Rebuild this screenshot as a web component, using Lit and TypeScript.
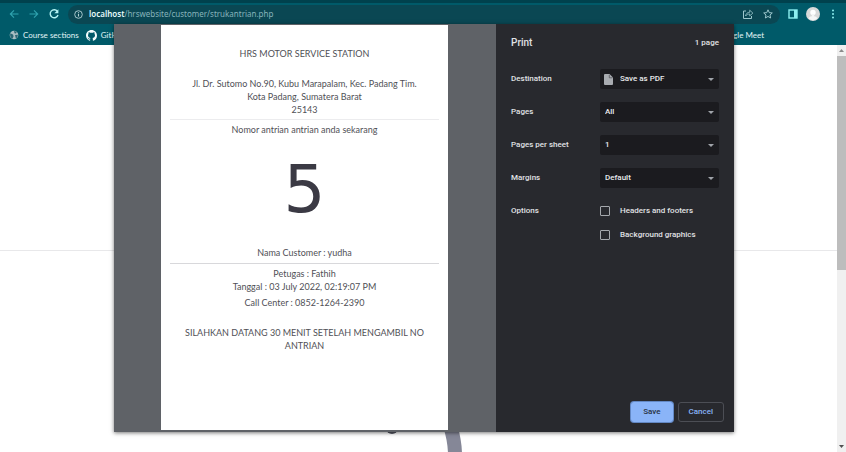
import { LitElement, html, css } from "lit";
import { customElement, property } from "lit/decorators.js";

@customElement("browser-bar")
class BrowserBar extends LitElement {
  static styles = css`
    :host { display: block; background: #005a69; color: #d5eff3; font-family: Lato, "Open Sans", sans-serif; }
    svg { display: block; flex: none; fill: none; stroke: currentColor; }
    svg.solid { stroke: none; }
    button { all: unset; display: block; flex: none; }
    .tabs { height: 3px; background: #00414d; }
    .tools { display: flex; align-items: center; height: 22px; padding: 0 8px; }
    .nav { display: flex; gap: 8px; margin-right: 8px; color: #2fa3af; }
    .nav .bright { color: #b4f3f4; }
    .address { flex: 1; display: flex; align-items: center; box-sizing: border-box; height: 19px; padding: 0 6px; border-radius: 10px; background: #0a4753; }
    .url { flex: 1; margin-left: 6px; font: 8px/16px "Noto Sans", sans-serif; color: #86b3bb; white-space: nowrap; }
    .url b { font-weight: 600; color: #e6fafb; }
    .actions { display: flex; gap: 8px; color: #9cc6cc; }
    .right { display: flex; align-items: center; gap: 8px; margin-left: 8px; color: #8ceff0; }
    .marks { display: flex; align-items: center; height: 20px; padding: 0 82px 0 9px; }
    .marks a { display: flex; align-items: center; gap: 4px; margin-right: 7px; color: #e1f5f7; font-size: 8px; line-height: 16px; text-decoration: none; white-space: nowrap; }
    .marks a:last-child { margin: 0 0 0 auto; }
  `;
  render() {
    return html`
      <div class="tabs"></div>
      <div class="tools">
        <div class="nav">
          <button aria-label="Back"><svg width="12" height="12" viewBox="0 0 12 12" stroke-width="1.1"><path d="M10.5 6H2.5M6 2.3 2.3 6 6 9.7" /></svg></button>
          <button aria-label="Forward"><svg width="12" height="12" viewBox="0 0 12 12" stroke-width="1.1"><path d="M1.5 6h8M6 2.3 9.7 6 6 9.7" /></svg></button>
          <button class="bright" aria-label="Reload"><svg width="12" height="12" viewBox="0 0 12 12" stroke-width="1.4"><path d="M9.4 3.4A4 4 0 1 0 10 7" /><path d="M10.4 1.2v4H6.4z" fill="currentColor" stroke="none" /></svg></button>
        </div>
        <div class="address">
          <svg width="9" height="9" viewBox="0 0 9 9"><g stroke="#b4d2d6"><circle cx="4.5" cy="4.5" r="3.8" stroke-width=".9" /><path d="M4.5 4v2.6M4.5 2.2v1" stroke-width="1.1" /></g></svg>
          <div class="url"><b>localhost</b>/hrswebsite/customer/strukantrian.php</div>
          <div class="actions">
            <button aria-label="Share"><svg width="12" height="12" viewBox="0 0 12 12"><path d="M4 3H1.5v7.5H9.5V8" /><path d="M3.5 8C4 5.5 5.5 4.3 7.7 4.3V2.2L10.9 5.1 7.7 7.9V6C6 6 4.6 6.5 3.5 8z" stroke-width=".8" /></svg></button>
            <button aria-label="Bookmark"><svg width="12" height="12" viewBox="0 0 12 12"><path d="M6 1.8 7.25 4.65 10.3 4.95 8 7 8.65 10 6 8.45 3.35 10 4 7 1.7 4.95 4.75 4.65z" /></svg></button>
          </div>
        </div>
        <div class="right">
          <button aria-label="Side panel"><svg width="10" height="10" viewBox="0 0 10 10"><rect x="1" y="1" width="8" height="8" stroke-width="1.4" /><path d="M6 1h3v8H6z" fill="currentColor" stroke="none" /></svg></button>
          <button aria-label="Profile"><svg class="solid" width="14" height="14" viewBox="0 0 14 14"><circle cx="7" cy="7" r="7" fill="#d8d9d9" /><circle cx="7" cy="5.5" r="2.7" fill="#fff" /><path d="M5.8 7h2.4v2.3c2 .3 2.8 1 3.1 2.2a6 6 0 0 1-8.6 0c.3-1.2 1.1-1.9 3.1-2.2z" fill="#f5f6f6" /></svg></button>
          <button aria-label="Menu"><svg class="solid" width="10" height="12" viewBox="0 0 10 12"><g fill="#8ceff0"><circle cx="5" cy="2.5" r="1" /><circle cx="5" cy="6" r="1" /><circle cx="5" cy="9.5" r="1" /></g></svg></button>
        </div>
      </div>
      <nav class="marks">
        <a href="#"><svg class="solid" width="10" height="10" viewBox="0 0 10 10"><circle cx="5" cy="5" r="4.3" fill="#a9bdc2" /><path d="M1.2 3.3 4 4.5 4.6 6.2 3.5 8.8C1.7 8 .8 6 1.2 3.3zM5 1l2.8.8L7 3.6 5.5 3.3zM6 5l2.8-.3C9 6.5 8 8 6.8 8.3z" fill="#2b6673" /></svg>Course sections</a>
        <a href="#"><svg class="solid" width="11" height="11" viewBox="0 0 16 16"><path fill="#f3fdfd" d="M8 0C3.58 0 0 3.58 0 8c0 3.54 2.29 6.53 5.47 7.59.4.07.55-.17.55-.38 0-.19-.01-.82-.01-1.49-2.01.37-2.53-.49-2.69-.94-.09-.23-.48-.94-.82-1.13-.28-.15-.68-.52-.01-.53.63-.01 1.08.58 1.23.82.72 1.21 1.87.87 2.33.66.07-.52.28-.87.51-1.07-1.78-.2-3.64-.89-3.64-3.95 0-.87.31-1.59.82-2.15-.08-.2-.36-1.02.08-2.12 0 0 .67-.21 2.2.82.64-.18 1.32-.27 2-.27s1.36.09 2 .27c1.53-1.04 2.2-.82 2.2-.82.44 1.1.16 1.92.08 2.12.51.56.82 1.27.82 2.15 0 3.07-1.87 3.75-3.65 3.95.29.25.54.73.54 1.48 0 1.07-.01 1.93-.01 2.2 0 .21.15.46.55.38A8.01 8.01 0 0 0 16 8c0-4.42-3.58-8-8-8z" /></svg>GitHub</a>
        <a href="#">Google Meet</a>
      </nav>
    `;
  }
}

@customElement("print-select")
class PrintSelect extends LitElement {
  @property() label = "";
  @property() value = "";
  @property({ type: Boolean }) file = false;
  static styles = css`
    :host { display: block; }
    .row { display: grid; grid-template-columns: 89px 1fr; align-items: center; }
    label { color: #e0e2e5; }
    .box { display: grid; align-items: center; }
    .box > * { grid-area: 1 / 1; }
    select { appearance: none; width: 100%; height: 20px; margin: 0; padding: 0 20px 0 5px; border: 0; border-radius: 2px; background: #1b1b1f; color: #e8eaed; font: inherit; }
    select.file { padding-left: 20px; }
    svg { pointer-events: none; z-index: 1; }
    .arrow { justify-self: end; margin-right: 5px; }
    .doc { margin-left: 4px; }
  `;
  render() {
    return html`<div class="row">
      <label for="s">${this.label}</label>
      <div class="box">
        <select id="s" class=${this.file ? "file" : ""}><option>${this.value}</option></select>
        ${this.file ? html`<svg class="doc" width="9" height="11" viewBox="0 0 9 11"><path d="M1 0h4.5L9 3.5V10a1 1 0 0 1-1 1H1a1 1 0 0 1-1-1V1a1 1 0 0 1 1-1z" fill="#a8abb0" /><path d="M5.3.8v3h3" fill="none" stroke="#4a4b50" stroke-width=".7" /></svg>` : ""}
        <svg class="arrow" width="6" height="3" viewBox="0 0 6 3"><path d="M0 0h6L3 3z" fill="#a0a4aa" /></svg>
      </div>
    </div>`;
  }
}

@customElement("queue-ticket")
class QueueTicket extends LitElement {
  static styles = css`
    :host { display: block; flex: 1; min-width: 0; box-sizing: border-box; padding: 22px 9px 0; background: #fff; color: #505056; text-align: center; font: 9px/13px Lato, "Open Sans", sans-serif; }
    p { margin: 0; padding: 0 12px; }
    .address { margin-top: 17px; }
    hr { height: 1px; margin: 3px 0; border: 0; background: #ececee; }
    .strong { margin-top: 4px; background: #d8d8db; }
    .number { margin: 16px 0 18px; font: 66px/76px "DejaVu Sans", sans-serif; color: #3b3a44; }
    .call { margin-top: 3px; }
    .note { margin-top: 17px; }
  `;
  render() {
    return html`
      <p>HRS MOTOR SERVICE STATION</p>
      <p class="address">Jl. Dr. Sutomo No.90, Kubu Marapalam, Kec. Padang Tim.<br />Kota Padang, Sumatera Barat<br />25143</p>
      <hr />
      <p>Nomor antrian antrian anda sekarang</p>
      <p class="number">5</p>
      <p>Nama Customer : yudha</p>
      <hr class="strong" />
      <p>Petugas : Fathih<br />Tanggal : 03 July 2022, 02:19:07 PM</p>
      <p class="call">Call Center : 0852-1264-2390</p>
      <p class="note">SILAHKAN DATANG 30 MENIT SETELAH MENGAMBIL NO<br />ANTRIAN</p>
    `;
  }
}

@customElement("print-dialog")
class PrintDialog extends LitElement {
  static styles = css`
    :host { display: grid; grid-template-columns: 382fr 238fr; width: 100%; max-width: 620px; background: #28292e; box-shadow: 0 1px 4px #0008; font: 500 8px/12px Roboto, sans-serif; color: #e0e2e5; }
    .preview { display: flex; padding: 1px 48px 2px 47px; background: #5f6267; }
    .side { display: flex; flex-direction: column; min-width: 0; padding: 12px 15px 10px; }
    .head { display: flex; align-items: center; justify-content: space-between; height: 14px; margin-bottom: 19px; }
    h1 { margin: 0; font-size: 10px; font-weight: 500; }
    .rows { display: flex; flex-direction: column; gap: 13px; }
    fieldset { display: grid; grid-template-columns: 89px 1fr; margin: 17px 0 0; padding: 0; border: 0; }
    .checks { display: flex; flex-direction: column; gap: 12px; }
    .checks label { display: flex; align-items: center; gap: 10px; white-space: nowrap; }
    input { appearance: none; box-sizing: border-box; width: 10px; height: 10px; margin: 0; border: 1px solid #a5a8ad; border-radius: 1px; }
    .buttons { display: flex; align-items: center; justify-content: flex-end; gap: 5px; margin: auto -5px 0 0; }
    button { box-sizing: border-box; height: 20px; padding: 0 10px; border: 1px solid #4c4e55; border-radius: 3px; background: none; color: #8ab4f8; font: inherit; }
    .save { padding: 0 11px; border-color: #8ab4f8; background: #8ab4f8; color: #27313f; box-shadow: 0 0 0 1px #6388c4; }
  `;
  render() {
    return html`
      <div class="preview"><queue-ticket></queue-ticket></div>
      <section class="side">
        <div class="head"><h1>Print</h1><span>1 page</span></div>
        <div class="rows">
          <print-select label="Destination" value="Save as PDF" file></print-select>
          <print-select label="Pages" value="All"></print-select>
          <print-select label="Pages per sheet" value="1"></print-select>
          <print-select label="Margins" value="Default"></print-select>
        </div>
        <fieldset aria-label="Options">
          <span>Options</span>
          <div class="checks">
            <label><input type="checkbox" />Headers and footers</label>
            <label><input type="checkbox" />Background graphics</label>
          </div>
        </fieldset>
        <div class="buttons"><button class="save">Save</button><button>Cancel</button></div>
      </section>
    `;
  }
}

@customElement("app-root")
class AppRoot extends LitElement {
  static styles = css`
    :host { display: flex; flex-direction: column; position: relative; height: 100vh; overflow: hidden; background: #fff; }
    .page { flex: 1; display: flex; min-height: 0; }
    .content { flex: 1; display: flex; flex-direction: column; align-items: center; overflow: hidden; }
    .divider { width: 100%; height: 1px; margin: 205px 0 175px; border: 0; background: #e8e8ea; flex: none; }
    .ring { flex: none; }
    .scroll { display: flex; flex-direction: column; align-items: center; width: 9px; background: #f0f0f0; }
    .scroll svg { flex: none; margin: 4px 0; }
    .thumb { width: 9px; height: 214px; margin-bottom: auto; background: #bdbdbd; }
    .overlay { position: absolute; inset: 24px 0 20px; display: flex; justify-content: center; padding-left: 2px; }
  `;
  render() {
    return html`
      <browser-bar></browser-bar>
      <div class="page">
        <main class="content">
          <hr class="divider" />
          <svg class="ring" width="86" height="86" viewBox="0 0 86 86"><circle cx="16" cy="2" r="6" fill="#555762" /><path d="M73 -4C77 8 79 18 79 29S73 56 64 64" fill="none" stroke="#858797" stroke-width="14" /></svg>
        </main>
        <div class="scroll">
          <svg width="5" height="3" viewBox="0 0 5 3"><path d="M0 3h5L2.5 0z" fill="#8a8a8a" /></svg>
          <div class="thumb"></div>
          <svg width="5" height="3" viewBox="0 0 5 3"><path d="M0 0h5L2.5 3z" fill="#505050" /></svg>
        </div>
      </div>
      <div class="overlay"><print-dialog></print-dialog></div>
    `;
  }
}
